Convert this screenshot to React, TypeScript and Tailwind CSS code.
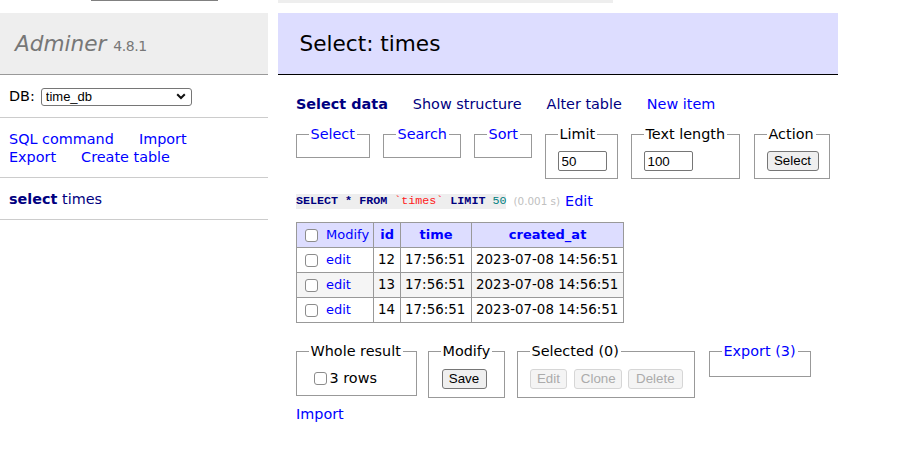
import React from "react";

const FS = ({
  legend,
  className,
  children,
}: {
  legend: React.ReactNode;
  className: string;
  children?: React.ReactNode;
}) => (
  <fieldset className={"border border-[#999] px-[11.5px] pt-[7px] min-w-0 shrink-0 " + className}>
    <legend className="px-[2px] leading-[18px] whitespace-nowrap">{legend}</legend>
    {children}
  </fieldset>
);

const Btn = ({ label, className }: { label: string; className: string }) => (
  <button
    type="button"
    className={
      "h-[20px] border border-[#767676] rounded-[3px] bg-[#efefef] text-black text-[13.33px] leading-[16px] font-['Liberation_Sans',Arial,sans-serif] " +
      className
    }
  >
    {label}
  </button>
);

const DisBtn = ({ label, className }: { label: string; className: string }) => (
  <button
    type="button"
    disabled
    className={
      "h-[20px] border border-[#d6d6d6] rounded-[3px] bg-[#f4f4f4] text-[#ababab] text-[13.33px] leading-[16px] font-['Liberation_Sans',Arial,sans-serif] " +
      className
    }
  >
    {label}
  </button>
);

const Check = ({ className }: { className: string }) => (
  <input
    type="checkbox"
    className={
      "appearance-none shrink-0 w-[13px] h-[13px] border border-[#8c8c8c] rounded-[3px] bg-white " + className
    }
  />
);

const rows = [
  { id: 12, time: "17:56:51", created: "2023-07-08 14:56:51", bg: "bg-white" },
  { id: 13, time: "17:56:51", created: "2023-07-08 14:56:51", bg: "bg-[#f5f5f5]" },
  { id: 14, time: "17:56:51", created: "2023-07-08 14:56:51", bg: "bg-white" },
];

export default function App() {
  return (
    <div className="w-[918px] h-[457px] overflow-hidden bg-white text-black text-[14.4px] leading-[18px] font-['DejaVu_Sans',Verdana,sans-serif]">
      {/* top remnants */}
      <div className="flex h-[13px]">
        <div className="ml-[91px] w-[127px] h-px bg-[#808080]" />
        <div className="ml-[60px] w-[335px] h-[3px] bg-[#eeeeee]" />
      </div>

      <div className="flex">
        {/* Sidebar */}
        <aside className="w-[268px] shrink-0">
          <h1 className="h-[62px] bg-[#eeeeee] border-b border-[#999] pl-[15px] pt-[17px] text-[21.6px] leading-[27px] font-normal text-[#777]">
            <span className="italic">Adminer</span>{" "}
            <span className="text-[14px] tracking-[-0.4px]">4.8.1</span>
          </h1>

          <div className="h-[43px] border-b border-[#ccc] px-[9px] flex items-center">
            <span>DB:</span>
            <div className="relative ml-[6px]">
              <select className="appearance-none w-[151px] h-[18px] border border-[#767676] rounded-[3px] bg-white pl-[4px] text-[13px] leading-[16px] font-['Liberation_Sans',Arial,sans-serif] text-black">
                <option>time_db</option>
              </select>
              <svg
                className="absolute right-[6px] top-[6px] pointer-events-none"
                width="10"
                height="7"
                viewBox="0 0 10 7"
              >
                <path d="M1.2 1.2 L5 5 L8.8 1.2" stroke="#111" strokeWidth="2" fill="none" />
              </svg>
            </div>
          </div>

          <div className="h-[60px] border-b border-[#ccc] px-[9px] pt-[11.5px]">
            <div className="flex gap-[25px]">
              <a className="text-[#0000ff]">SQL command</a>
              <a className="text-[#0000ff]">Import</a>
            </div>
            <div className="flex gap-[25px]">
              <a className="text-[#0000ff]">Export</a>
              <a className="text-[#0000ff]">Create table</a>
            </div>
          </div>

          <div className="h-[42px] border-b border-[#ccc] px-[9px] pt-[11.5px] text-[#000080]">
            <a className="font-bold">select</a> <a>times</a>
          </div>
        </aside>

        {/* Main */}
        <main className="ml-[10px] w-[560px] shrink-0">
          <h2 className="h-[62px] bg-[#ddddff] border-b border-black pl-[21.6px] pt-[17px] text-[21.6px] leading-[27px] font-normal">
            Select: times
          </h2>

          <div className="pl-[18px]">
            <p className="mt-[20px] flex gap-[25px]">
              <a className="font-bold text-[#000080]">Select data</a>
              <a className="text-[#000080]">Show structure</a>
              <a className="text-[#000080]">Alter table</a>
              <a className="text-[#0000ff]">New item</a>
            </p>

            <form className="mt-[12px] flex items-start">
              <FS legend={<a className="text-[#0000ff]">Select</a>} className="w-[74px] h-[33px]" />
              <FS legend={<a className="text-[#0000ff]">Search</a>} className="ml-[13px] w-[78px] h-[33px]" />
              <FS legend={<a className="text-[#0000ff]">Sort</a>} className="ml-[13px] w-[58px] h-[33px]" />
              <FS legend="Limit" className="ml-[13px] w-[73px] h-[54px]">
                <input
                  defaultValue="50"
                  className="mt-[1px] w-[49px] h-[20px] border border-[#767676] rounded-[2px] px-[3px] bg-white text-[13.33px] font-['Liberation_Sans',Arial,sans-serif]"
                />
              </FS>
              <FS legend="Text length" className="ml-[13px] w-[109px] h-[54px]">
                <input
                  defaultValue="100"
                  className="mt-[1px] w-[49px] h-[20px] border border-[#767676] rounded-[2px] px-[3px] bg-white text-[13.33px] font-['Liberation_Sans',Arial,sans-serif]"
                />
              </FS>
              <FS legend="Action" className="ml-[14px] w-[76px] h-[54px]">
                <Btn label="Select" className="mt-[1px] w-[52px]" />
              </FS>
            </form>

            <p className="mt-[13px] flex items-center h-[18px]">
              <code className="inline-block bg-[#eeeeee] leading-[15px] text-[11.7px] font-['Liberation_Mono','Courier_New',monospace] whitespace-pre">
                <span className="font-bold text-[#000080]">SELECT</span>
                <span className="font-bold text-[#000080]"> * </span>
                <span className="font-bold text-[#000080]">FROM</span>{" "}
                <span className="text-[#ff2020]">`times`</span>{" "}
                <span className="font-bold text-[#000080]">LIMIT</span>{" "}
                <span className="text-[#008080]">50</span>
              </code>
              <span className="ml-[7px] text-[10.4px] text-[#c0c0c0]">(0.001 s)</span>
              <a className="ml-[5px] text-[#0000ff]">Edit</a>
            </p>

            <table className="mt-[12px] border-collapse table-fixed text-[13px] leading-[18px]">
              <thead>
                <tr className="bg-[#ddddff]">
                  <td className="w-[76px] border border-[#999] px-[4px] py-[3px] whitespace-nowrap">
                    <div className="flex items-center">
                      <Check className="ml-[4px]" />
                      <a className="ml-[8px] text-[#0000ff]">Modify</a>
                    </div>
                  </td>
                  <th className="w-[27px] border border-[#999] px-[4px] py-[3px] font-bold text-[#0000ff] text-center">
                    id
                  </th>
                  <th className="w-[71px] border border-[#999] px-[4px] py-[3px] font-bold text-[#0000ff] text-center">
                    time
                  </th>
                  <th className="w-[152px] border border-[#999] px-[4px] py-[3px] font-bold text-[#0000ff] text-center">
                    created_at
                  </th>
                </tr>
              </thead>
              <tbody className="text-[13.4px]">
                {rows.map((r) => (
                  <tr key={r.id} className={r.bg}>
                    <td className="border border-[#999] px-[4px] py-[3px] whitespace-nowrap text-[13px]">
                      <div className="flex items-center">
                        <Check className="ml-[4px]" />
                        <a className="ml-[8px] text-[#0000ff]">edit</a>
                      </div>
                    </td>
                    <td className="border border-[#999] px-[4px] py-[3px] whitespace-nowrap">{r.id}</td>
                    <td className="border border-[#999] px-[4px] py-[3px] whitespace-nowrap">{r.time}</td>
                    <td className="border border-[#999] px-[4px] py-[3px] whitespace-nowrap">{r.created}</td>
                  </tr>
                ))}
              </tbody>
            </table>

            <div className="mt-[19px] flex items-start">
              <FS legend="Whole result" className="w-[121px] h-[54px]">
                <label className="flex items-center h-[22px]">
                  <Check className="ml-[5px] mr-[3px]" />
                  <span>3 rows</span>
                </label>
              </FS>
              <FS legend="Modify" className="ml-[11px] w-[77px] h-[56px]">
                <Btn label="Save" className="mt-[2px] ml-[1px] w-[45px]" />
              </FS>
              <FS legend="Selected (0)" className="ml-[12px] w-[178px] h-[56px]">
                <div className="mt-[2px] flex">
                  <DisBtn label="Edit" className="w-[39px]" />
                  <DisBtn label="Clone" className="ml-[7px] w-[49px]" />
                  <DisBtn label="Delete" className="ml-[6px] w-[56px]" />
                </div>
              </FS>
              <FS legend={<a className="text-[#0000ff]">Export (3)</a>} className="ml-[14px] w-[102px] h-[35px]" />
            </div>

            <p className="mt-[7px]">
              <a className="text-[#0000ff]">Import</a>
            </p>
          </div>
        </main>
      </div>
    </div>
  );
}
